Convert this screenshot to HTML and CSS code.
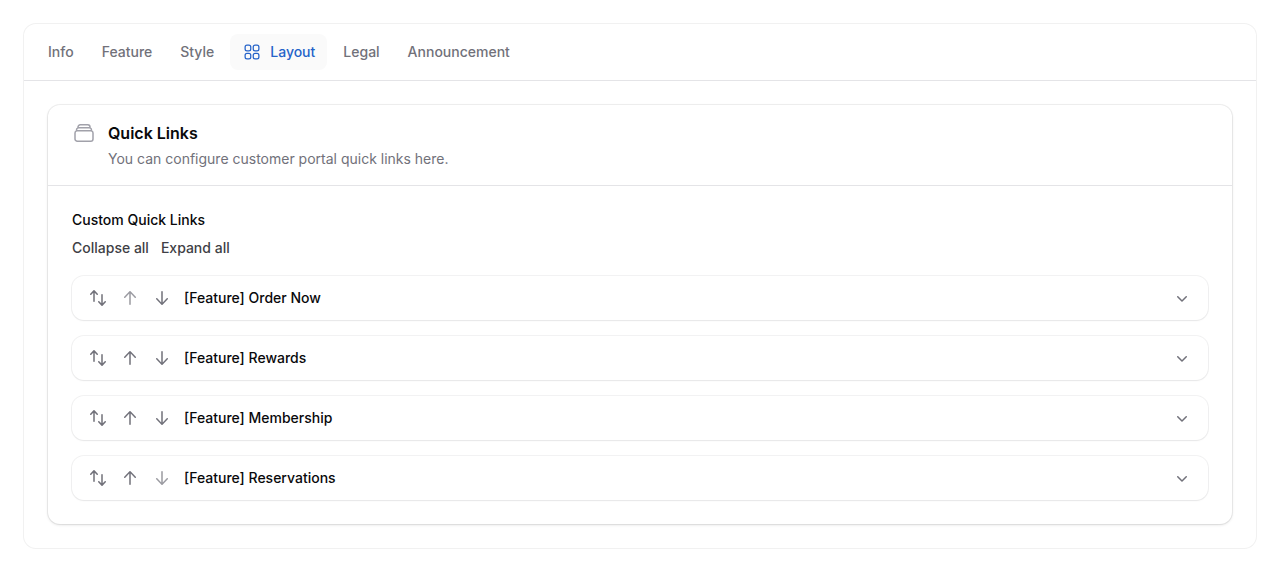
FILE: index.html
```html
<!DOCTYPE html>
<html lang="en">

<head>
  <meta charset="UTF-8">
  <meta name="viewport" content="width=device-width, initial-scale=1.0">
  <title>Layout</title>
  <link rel="stylesheet" href="styles.css">
</head>

<body>
  <!-- shared icons -->
  <svg class="sprite" aria-hidden="true">
    <symbol id="icon-sort" viewBox="0 0 20 20">
      <path fill-rule="evenodd" d="M2.24 6.8a.75.75 0 0 0 1.06-.04l1.95-2.1v8.59a.75.75 0 0 0 1.5 0V4.66l1.95 2.1a.75.75 0 1 0 1.1-1.02l-3.25-3.5a.75.75 0 0 0-1.1 0L2.2 5.74a.75.75 0 0 0 .04 1.06Zm8 6.4a.75.75 0 0 0-.04 1.06l3.25 3.5a.75.75 0 0 0 1.1 0l3.25-3.5a.75.75 0 1 0-1.1-1.02l-1.95 2.1V6.75a.75.75 0 0 0-1.5 0v8.59l-1.95-2.1a.75.75 0 0 0-1.06-.04Z" />
    </symbol>
    <symbol id="icon-up" viewBox="0 0 20 20">
      <path fill-rule="evenodd" d="M10 17a.75.75 0 0 1-.75-.75V5.612L5.29 9.77a.75.75 0 0 1-1.08-1.04l5.25-5.5a.75.75 0 0 1 1.08 0l5.25 5.5a.75.75 0 1 1-1.08 1.04l-3.96-4.158V16.25A.75.75 0 0 1 10 17Z" />
    </symbol>
    <symbol id="icon-down" viewBox="0 0 20 20">
      <path fill-rule="evenodd" d="M10 3a.75.75 0 0 1 .75.75v10.638l3.96-4.158a.75.75 0 1 1 1.08 1.04l-5.25 5.5a.75.75 0 0 1-1.08 0l-5.25-5.5a.75.75 0 1 1 1.08-1.04l3.96 4.158V3.75A.75.75 0 0 1 10 3Z" />
    </symbol>
    <symbol id="icon-chevron" viewBox="0 0 20 20">
      <path fill-rule="evenodd" d="M5.22 8.22a.75.75 0 0 1 1.06 0L10 11.94l3.72-3.72a.75.75 0 1 1 1.06 1.06l-4.25 4.25a.75.75 0 0 1-1.06 0L5.22 9.28a.75.75 0 0 1 0-1.06Z" />
    </symbol>
  </svg>

  <main class="tabs">
    <nav class="tab-list">
      <button type="button" class="tab">Info</button>
      <button type="button" class="tab">Feature</button>
      <button type="button" class="tab">Style</button>
      <button type="button" class="tab active">
        <svg class="icon outline" viewBox="0 0 24 24">
          <path d="M3.75 6A2.25 2.25 0 0 1 6 3.75h2.25A2.25 2.25 0 0 1 10.5 6v2.25a2.25 2.25 0 0 1-2.25 2.25H6a2.25 2.25 0 0 1-2.25-2.25V6ZM3.75 15.75A2.25 2.25 0 0 1 6 13.5h2.25a2.25 2.25 0 0 1 2.25 2.25V18a2.25 2.25 0 0 1-2.25 2.25H6A2.25 2.25 0 0 1 3.75 18v-2.25ZM13.5 6a2.25 2.25 0 0 1 2.25-2.25H18A2.25 2.25 0 0 1 20.25 6v2.25A2.25 2.25 0 0 1 18 10.5h-2.25a2.25 2.25 0 0 1-2.25-2.25V6ZM13.5 15.75a2.25 2.25 0 0 1 2.25-2.25H18a2.25 2.25 0 0 1 2.25 2.25V18A2.25 2.25 0 0 1 18 20.25h-2.25A2.25 2.25 0 0 1 13.5 18v-2.25Z" />
        </svg>
        Layout
      </button>
      <button type="button" class="tab">Legal</button>
      <button type="button" class="tab">Announcement</button>
    </nav>

    <div class="tab-panel">
      <section class="section">
        <header class="section-header">
          <svg class="section-icon outline" viewBox="0 0 24 24">
            <path d="M6 6.878V6a2.25 2.25 0 0 1 2.25-2.25h7.5A2.25 2.25 0 0 1 18 6v.878m-12 0c.235-.083.487-.128.75-.128h10.5c.263 0 .515.045.75.128m-12 0A2.25 2.25 0 0 0 4.5 9v.878m13.5-3A2.25 2.25 0 0 1 19.5 9v.878m0 0a2.246 2.246 0 0 0-.75-.128H5.25c-.263 0-.515.045-.75.128m15 0A2.25 2.25 0 0 1 21 12v6a2.25 2.25 0 0 1-2.25 2.25H5.25A2.25 2.25 0 0 1 3 18v-6c0-.98.626-1.813 1.5-2.122" />
          </svg>
          <div class="section-heading">
            <h1>Quick Links</h1>
            <p>You can configure customer portal quick links here.</p>
          </div>
        </header>

        <div class="section-content">
          <h2>Custom Quick Links</h2>
          <div class="list-actions">
            <button type="button" class="link-btn">Collapse all</button>
            <button type="button" class="link-btn">Expand all</button>
          </div>

          <ul class="items">
            <li class="item">
              <button type="button" class="icon-btn" aria-label="Move"><svg class="icon"><use href="#icon-sort" /></svg></button>
              <button type="button" class="icon-btn" aria-label="Move up" disabled><svg class="icon"><use href="#icon-up" /></svg></button>
              <button type="button" class="icon-btn" aria-label="Move down"><svg class="icon"><use href="#icon-down" /></svg></button>
              <h3>[Feature] Order Now</h3>
              <button type="button" class="icon-btn" aria-label="Expand"><svg class="icon"><use href="#icon-chevron" /></svg></button>
            </li>
            <li class="item">
              <button type="button" class="icon-btn" aria-label="Move"><svg class="icon"><use href="#icon-sort" /></svg></button>
              <button type="button" class="icon-btn" aria-label="Move up"><svg class="icon"><use href="#icon-up" /></svg></button>
              <button type="button" class="icon-btn" aria-label="Move down"><svg class="icon"><use href="#icon-down" /></svg></button>
              <h3>[Feature] Rewards</h3>
              <button type="button" class="icon-btn" aria-label="Expand"><svg class="icon"><use href="#icon-chevron" /></svg></button>
            </li>
            <li class="item">
              <button type="button" class="icon-btn" aria-label="Move"><svg class="icon"><use href="#icon-sort" /></svg></button>
              <button type="button" class="icon-btn" aria-label="Move up"><svg class="icon"><use href="#icon-up" /></svg></button>
              <button type="button" class="icon-btn" aria-label="Move down"><svg class="icon"><use href="#icon-down" /></svg></button>
              <h3>[Feature] Membership</h3>
              <button type="button" class="icon-btn" aria-label="Expand"><svg class="icon"><use href="#icon-chevron" /></svg></button>
            </li>
            <li class="item">
              <button type="button" class="icon-btn" aria-label="Move"><svg class="icon"><use href="#icon-sort" /></svg></button>
              <button type="button" class="icon-btn" aria-label="Move up"><svg class="icon"><use href="#icon-up" /></svg></button>
              <button type="button" class="icon-btn" aria-label="Move down" disabled><svg class="icon"><use href="#icon-down" /></svg></button>
              <h3>[Feature] Reservations</h3>
              <button type="button" class="icon-btn" aria-label="Expand"><svg class="icon"><use href="#icon-chevron" /></svg></button>
            </li>
          </ul>
        </div>
      </section>
    </div>
  </main>
</body>

</html>
```

FILE: styles.css
```css
* {
  box-sizing: border-box;
  margin: 0;
  padding: 0;
}

body {
  font-family: Inter, sans-serif;
  font-size: 14px;
  line-height: 20px;
  color: #09090b;
  background-color: #fff;
  padding: 24px;
}

button {
  font: inherit;
  color: inherit;
  background: none;
  border: none;
  cursor: pointer;
}

.sprite {
  display: none;
}

.icon {
  display: block;
  width: 20px;
  height: 20px;
  fill: currentColor;
}

.outline {
  fill: none;
  stroke: currentColor;
  stroke-width: 1.5;
  stroke-linecap: round;
  stroke-linejoin: round;
}

.tabs {
  border-radius: 12px;
  box-shadow: 0 0 0 1px rgba(9, 9, 11, 0.06);
}

.tab-list {
  display: flex;
  gap: 4px;
  padding: 10px 12px;
  border-bottom: 1px solid #e4e4e7;
}

.tab {
  display: flex;
  align-items: center;
  gap: 8px;
  padding: 8px 12px;
  border-radius: 8px;
  font-weight: 500;
  color: #71717a;
}

.tab:hover,
.tab.active {
  background-color: #fafafa;
}

.tab.active {
  color: #2563c9;
}

.tab-panel {
  padding: 24px;
}

.section,
.item {
  background-color: #fff;
  border-radius: 12px;
  box-shadow: 0 0 0 1px rgba(9, 9, 11, 0.05), 0 1px 2px rgba(0, 0, 0, 0.05);
}

.section {
  box-shadow: 0 0 0 1px rgba(9, 9, 11, 0.06), 0 1px 3px rgba(0, 0, 0, 0.12);
}

.section-header {
  display: flex;
  gap: 12px;
  padding: 16px 24px;
}

.section-icon {
  width: 24px;
  height: 24px;
  color: #a1a1aa;
}

.section-heading {
  display: grid;
  gap: 4px;
}

.section-heading h1 {
  font-size: 16px;
  line-height: 24px;
  font-weight: 600;
}

.section-heading p {
  color: #71717a;
}

.section-content {
  padding: 24px;
  border-top: 1px solid #e4e4e7;
}

.section-content h2,
.item h3 {
  font-size: 14px;
  font-weight: 500;
}

.list-actions {
  display: flex;
  gap: 12px;
  margin: 8px 0 18px;
}

.link-btn {
  font-weight: 500;
  color: #3f3f46;
}

.link-btn:hover {
  text-decoration: underline;
}

.items {
  display: grid;
  gap: 16px;
  list-style: none;
}

.item {
  display: flex;
  align-items: center;
  gap: 12px;
  padding: 12px 16px;
}

.item h3 {
  flex: 1;
}

.icon-btn {
  color: #71717a;
}

.icon-btn:disabled {
  opacity: 0.7;
  cursor: default;
}
```
